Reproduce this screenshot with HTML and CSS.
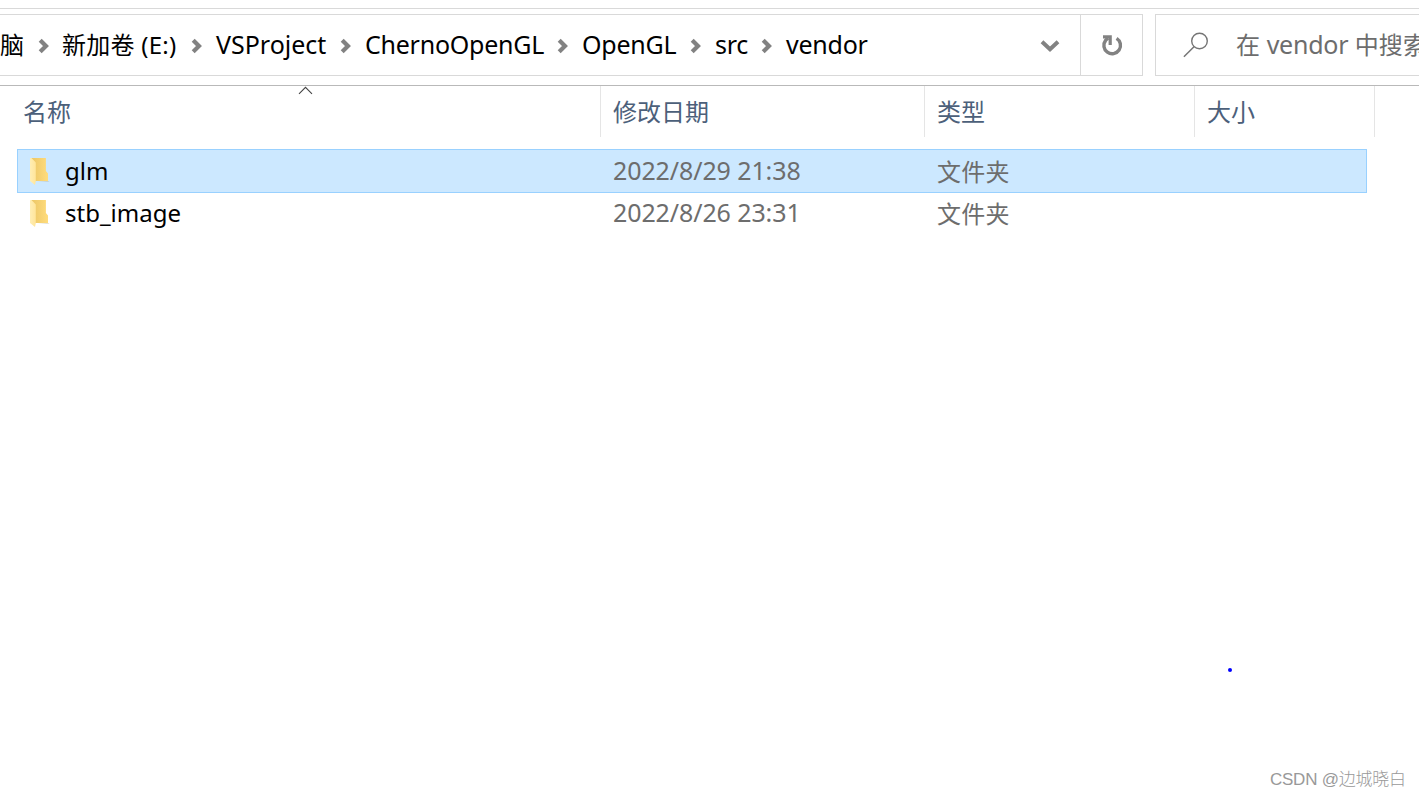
FILE: index.html
```html
<!DOCTYPE html>
<html lang="zh-CN">
<head>
<meta charset="utf-8">
<title>vendor</title>
<link rel="stylesheet" href="styles.css">
</head>
<body>
<svg class="defs" width="0" height="0">
  <defs>
    <linearGradient id="back" x1="0" y1="0" x2="1" y2="0"><stop offset="0" stop-color="#ebc666"/><stop offset="1" stop-color="#ffdc7c"/></linearGradient>
    <linearGradient id="front" x1="0" y1="0" x2="1" y2="0"><stop offset="0" stop-color="#ffeeb4"/><stop offset="1" stop-color="#ffe59a"/></linearGradient>
    <symbol id="chev" viewBox="0 0 12 16"><path d="M2.200 2.200 8 8l-5.800 5.800" fill="none" stroke="#828282" stroke-width="4.200"/></symbol>
    <symbol id="folder" viewBox="0 0 22 28"><path d="M1 0h14.900v13l2.100 2.500V23H5z" fill="url(#back)"/><path d="M17 23l2.500.3-1 .7H8z" fill="#b8b49c" opacity=".4"/><path d="M0 .3 1.500 0 5.800 4.500V23L5 27 0 23z" fill="url(#front)"/></symbol>
  </defs>
</svg>
<div class="window">
  <div class="toolbar">
    <div class="address">
      <div class="crumbs">
        <div class="crumb"><span class="label">脑</span><svg class="chev"><use href="#chev"/></svg></div>
        <div class="crumb"><span class="label drive">新加卷 (E:)</span><svg class="chev"><use href="#chev"/></svg></div>
        <div class="crumb"><span class="label latin">VSProject</span><svg class="chev"><use href="#chev"/></svg></div>
        <div class="crumb"><span class="label latin tight">ChernoOpenGL</span><svg class="chev"><use href="#chev"/></svg></div>
        <div class="crumb"><span class="label latin tight">OpenGL</span><svg class="chev"><use href="#chev"/></svg></div>
        <div class="crumb"><span class="label latin tight">src</span><svg class="chev"><use href="#chev"/></svg></div>
        <div class="crumb"><span class="label latin tight">vendor</span></div>
      </div>
      <div class="history"><svg width="20" height="14" viewBox="0 0 20 14"><path d="M2 2.800 10 10.200l8-7.400" fill="none" stroke="#828282" stroke-width="4"/></svg></div>
      <div class="refresh"><svg width="22" height="22" viewBox="0 0 22 22"><path d="M15.600 3.400A8.300 8.300 0 1 1 4.600 5.400L7 3" fill="none" stroke="#828282" stroke-width="3.400"/><path d="M2 1.900h7.200v8.200" fill="none" stroke="#828282" stroke-width="3.200"/></svg></div>
    </div>
    <div class="search">
      <svg width="26" height="26" viewBox="0 0 26 26"><circle cx="16.500" cy="9" r="7.800" fill="none" stroke="#757575" stroke-width="1.400"/><path d="M11 14.800.9 24.800" stroke="#757575" stroke-width="1.500"/></svg>
      <span class="hint">在 <span class="latin tight">vendor</span> 中搜索</span>
    </div>
  </div>
  <div class="header">
    <div class="col name">名称<svg class="sort" width="15" height="9" viewBox="0 0 15 9"><path d="M1 7.800 7.500 1.300 14 7.800" fill="none" stroke="#444" stroke-width="1.100"/></svg></div>
    <div class="col">修改日期</div>
    <div class="col">类型</div>
    <div class="col">大小</div>
  </div>
  <div class="list">
    <div class="row selected"><div class="file"><svg class="folder"><use href="#folder"/></svg><span>glm</span></div><div class="date">2022/8/29 21:38</div><div class="type">文件夹</div></div>
    <div class="row"><div class="file"><svg class="folder"><use href="#folder"/></svg><span>stb_image</span></div><div class="date">2022/8/26 23:31</div><div class="type">文件夹</div></div>
  </div>
  <div class="dot"></div>
  <div class="watermark">CSDN @边城晓白</div>
</div>
</body>
</html>
```
FILE: styles.css
```css
* { box-sizing: border-box; }
body { margin: 0; background: #fff; font: 24px/32px "Noto Sans", "Noto Sans CJK SC", sans-serif; color: #000; }
svg { display: block; flex: none; }
.defs { position: absolute; }
.window { position: relative; width: 1419px; height: 797px; overflow: hidden; padding-top: 8px; white-space: nowrap; }
.toolbar { display: flex; height: 78px; padding-top: 5px; border-top: 1px solid #d9d9d9; border-bottom: 1px solid #b9b9b9; }
.address { display: flex; width: 1143px; height: 62px; border: 1px solid #d9d9d9; border-left: 0; }
.crumbs { display: grid; flex: 1; align-items: center; grid-template-columns: 62px 154px 149px 217px 133px 71px 120px; }
.crumb { display: flex; justify-content: space-between; align-items: center; padding-right: 13px; }
.crumb:first-child { padding-right: 12px; }
.latin { font-size: 25px; }
.label.latin { padding-bottom: 2px; }
.tight { letter-spacing: -.25px; }
.drive { letter-spacing: .25px; }
.chev { width: 12px; height: 16px; margin-top: 1px; }
.history { display: flex; width: 61px; align-items: center; justify-content: center; padding-top: 2px; }
.refresh { display: flex; width: 62px; align-items: center; justify-content: center; padding-top: 2px; border-left: 1px solid #d9d9d9; }
.search { display: flex; align-items: center; flex: 1; height: 62px; margin-left: 12px; padding-left: 27px; border: 1px solid #d9d9d9; border-right: 0; color: #6d6d6d; overflow: hidden; }
.hint { margin-left: 27px; padding-bottom: 2px; letter-spacing: .2px; }
.header { display: grid; grid-template-columns: 601px 324px 270px 180px; height: 51px; color: #4c607a; }
.col { position: relative; padding: 10px 0 0 12px; border-right: 1px solid #e5e5e5; }
.name { padding-left: 23px; }
.sort { position: absolute; left: 298px; top: 0; }
.list { padding: 12px 0 0 17px; }
.row { display: grid; grid-template-columns: 595px 324px 1fr; width: 1350px; height: 42px; align-items: center; border: 1px solid transparent; color: #6d6d6d; }
.selected { height: 44px; margin-bottom: -1px; background: #cce8ff; border-color: #99d1ff; }
.date { font-size: 25px; letter-spacing: -.1px; padding-bottom: 2px; }
.type { letter-spacing: .2px; padding-top: 1px; }
.file { display: flex; align-items: center; color: #000; }
.folder { width: 22px; height: 28px; margin: 1px 13px 0 12px; }
.dot { position: absolute; left: 1227.500px; top: 667.500px; width: 4px; height: 4px; border-radius: 50%; background: #0000ff; }
.watermark { position: absolute; left: 1270px; top: 768px; font: 17px/24px "Liberation Sans", "Noto Sans CJK SC", sans-serif; font-weight: 300; letter-spacing: -.25px; color: #999; }
```
